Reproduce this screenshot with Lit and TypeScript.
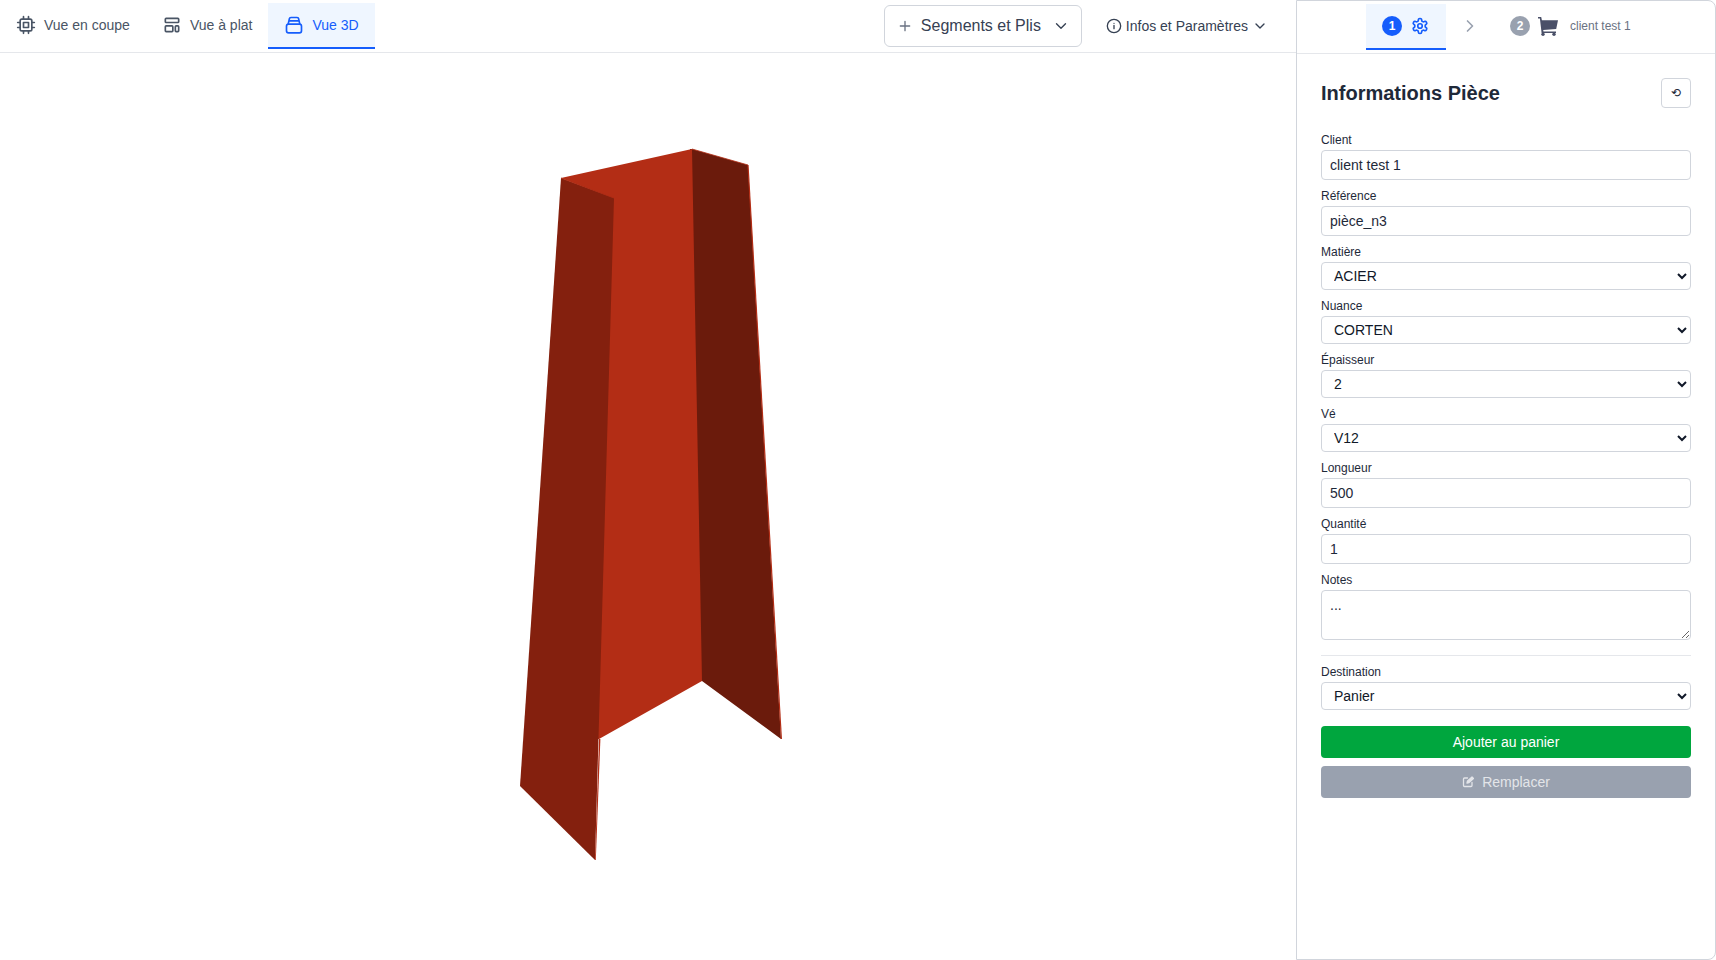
import { LitElement, html, css, svg } from "lit";
import { customElement } from "lit/decorators.js";

const chevron = html`<svg class="chev" viewBox="0 0 24 24" fill="none" stroke="currentColor" stroke-width="2" stroke-linecap="round" stroke-linejoin="round"><path d="M6 9l6 6 6-6"/></svg>`;

@customElement("app-root")
export class AppRoot extends LitElement {
  static styles = css`
    :host { display: flex; width: 1716px; height: 960px; overflow: hidden; background: #fff; font-family: "Liberation Sans", Arial, sans-serif; color: #1e2939; }
    * { box-sizing: border-box; }
    .main { flex: 1; min-width: 0; display: flex; flex-direction: column; }
    .topbar { height: 53px; flex: none; border-bottom: 1px solid #e5e7eb; display: flex; align-items: flex-start; }
    .tabs { display: flex; padding-top: 3px; }
    .tab { height: 46px; display: flex; align-items: center; gap: 8px; padding: 0 16px; font-size: 14px; color: #4a5565; border-bottom: 2px solid transparent; }
    .tab svg { width: 20px; height: 20px; flex: none; }
    .tab.active { color: #155dfc; background: #eff6ff; border-bottom-color: #155dfc; }
    .tools { margin-left: auto; display: flex; align-items: flex-start; padding: 5px 28px 0 0; }
    .seg { width: 198px; height: 42px; border: 1px solid #d1d5dc; border-radius: 6px; display: flex; align-items: center; padding: 0 11px 0 12px; font-size: 16px; color: #364153; margin-right: 24px; }
    .seg .plus { width: 16px; height: 16px; margin-right: 8px; color: #6a7282; }
    .seg .chev { width: 18px; height: 18px; margin-left: auto; stroke-width: 1.8; }
    .info { height: 42px; display: flex; align-items: center; font-size: 14px; color: #364153; }
    .info svg.i { width: 16px; height: 16px; margin-right: 4px; }
    .info .chev { width: 16px; height: 16px; margin-left: 4px; }
    .canvas { flex: 1; min-height: 0; position: relative; }
    .canvas svg { position: absolute; left: 0; top: -53px; width: 1296px; height: 960px; }
    .panel { width: 420px; flex: none; height: 960px; border: 1px solid #d1d5dc; border-radius: 0 8px 8px 0; display: flex; flex-direction: column; background: #fff; }
    .phead { height: 53px; flex: none; border-bottom: 1px solid #e5e7eb; display: flex; align-items: flex-start; padding-top: 3px; }
    .step1 { margin-left: 69px; width: 80px; height: 46px; background: #eff6ff; border-bottom: 2px solid #155dfc; display: flex; align-items: center; padding-left: 16px; gap: 9px; }
    .num { width: 20px; height: 20px; border-radius: 50%; color: #fff; font-size: 12px; font-weight: 700; display: flex; align-items: center; justify-content: center; flex: none; }
    .num.blue { background: #155dfc; }
    .num.gray { background: #99a1af; }
    .step1 svg { width: 18px; height: 18px; color: #155dfc; }
    .sep { width: 20px; height: 44px; margin-left: 14px; display: flex; align-items: center; color: #99a1af; }
    .sep svg { width: 20px; height: 20px; }
    .step2 { margin-left: 30px; height: 44px; display: flex; align-items: center; }
    .step2 svg { width: 20px; height: 19px; margin-left: 8px; color: #4a5068; }
    .step2 .t { font-size: 12px; color: #6a7282; margin-left: 12px; }
    .form { padding: 24px 24px 0 24px; display: flex; flex-direction: column; }
    .ftitle { display: flex; align-items: center; justify-content: space-between; height: 30px; margin-bottom: 24px; }
    .ftitle h2 { margin: 0; font-size: 20px; line-height: 28px; font-weight: 700; color: #1e2939; }
    .reset { width: 30px; height: 30px; border: 1px solid #d1d5dc; border-radius: 4px; display: flex; align-items: center; justify-content: center; font-family: "DejaVu Sans", sans-serif; font-size: 12px; color: #1e2939; }
    label { display: block; font-size: 12px; line-height: 16px; color: #1e2939; margin-bottom: 2px; }
    .f { margin-bottom: 8px; }
    input, select, textarea { display: block; width: 100%; font-family: inherit; font-size: 14px; color: #1e2939; background: #fff; border: 1px solid #d1d5dc; border-radius: 4px; margin: 0; outline: none; }
    input { height: 30px; padding: 0 8px; }
    select { height: 28px; padding: 0 8px; color: #101828; }
    textarea { height: 50px; padding: 6px 8px; resize: vertical; }
    hr { border: none; border-top: 1px solid #e5e7eb; margin: 15px 0 8px; }
    .notes { margin-bottom: 0; }
    .btn { height: 32px; border-radius: 4px; display: flex; align-items: center; justify-content: center; font-size: 14px; color: #fff; }
    .btn.green { background: #00a63e; margin-top: 16px; }
    .dest { margin-bottom: 0; }
    .btn.gray { background: #99a1af; color: #e3e5e9; margin-top: 8px; gap: 8px; }
    .btn.gray svg { width: 12px; height: 12px; }
  `;

  private input(l: string, v: string) {
    return html`<div class="f"><label>${l}</label><input .value=${v} /></div>`;
  }
  private select(l: string, v: string) {
    return html`<div class="f"><label>${l}</label><select><option>${v}</option></select></div>`;
  }

  render() {
    return html`
      <div class="main">
        <div class="topbar">
          <div class="tabs">
            <div class="tab">
              <svg viewBox="0 0 24 24" fill="none" stroke="currentColor" stroke-width="2" stroke-linecap="round" stroke-linejoin="round"><rect x="5" y="5" width="14" height="14" rx="2"/><rect x="9" y="9" width="6" height="6"/><path d="M9 2v3M15 2v3M9 19v3M15 19v3M2 9h3M2 15h3M19 9h3M19 15h3"/></svg>
              Vue en coupe
            </div>
            <div class="tab">
              <svg viewBox="0 0 24 24" fill="none" stroke="currentColor" stroke-width="2" stroke-linecap="round" stroke-linejoin="round"><rect x="4" y="4" width="16" height="5" rx="1"/><rect x="4" y="13" width="9" height="7" rx="1"/><rect x="16" y="13" width="4" height="7" rx="1"/></svg>
              Vue à plat
            </div>
            <div class="tab active">
              <svg viewBox="0 0 24 24" fill="none" stroke="currentColor" stroke-width="2" stroke-linecap="round" stroke-linejoin="round"><rect x="3" y="11" width="18" height="10.5" rx="2.5"/><path d="M5 11l1.4-6.2A2 2 0 0 1 8.4 3h7.2a2 2 0 0 1 2 1.8L19 11M5.8 7h12.4"/></svg>
              Vue 3D
            </div>
          </div>
          <div class="tools">
            <div class="seg">
              <svg class="plus" viewBox="0 0 24 24" fill="none" stroke="currentColor" stroke-width="2" stroke-linecap="round"><path d="M12 5v14M5 12h14"/></svg>
              Segments et Plis
              ${chevron}
            </div>
            <div class="info">
              <svg class="i" viewBox="0 0 24 24" fill="none" stroke="currentColor" stroke-width="2" stroke-linecap="round"><circle cx="12" cy="12" r="10"/><path d="M12 16v-5M12 8h.01"/></svg>
              Infos et Paramètres
              ${chevron}
            </div>
          </div>
        </div>
        <div class="canvas">
          <svg viewBox="0 0 1296 960">
            ${svg`
              <polygon points="690,149 692,149 748,165 781,739 702,681 700,681" fill="#6b1b0c"/>
              <polygon points="561,178 692,149 702,681 599,739 597,739 612,198" fill="#b32d15"/>
              <polygon points="561,178 614,198 595,860 520,786" fill="#84200e"/>
              <polygon points="599,739 600.4,739 595.8,860 595,860" fill="#b32d15"/>
              <polygon points="747.4,165 748.6,165 782,739 780.8,739" fill="#b32d15"/>
              <polyline points="561,178 614,198" fill="none" stroke="#b32d15" stroke-width="0.8"/>
              <polyline points="692,149 748,165" fill="none" stroke="#b32d15" stroke-width="0.8"/>
            `}
          </svg>
        </div>
      </div>
      <aside class="panel">
        <div class="phead">
          <div class="step1">
            <span class="num blue">1</span>
            <svg viewBox="0 0 24 24" fill="none" stroke="currentColor" stroke-width="2.2" stroke-linecap="round" stroke-linejoin="round"><path d="M12.22 2h-.44a2 2 0 0 0-2 2v.18a2 2 0 0 1-1 1.73l-.43.25a2 2 0 0 1-2 0l-.15-.08a2 2 0 0 0-2.73.73l-.22.38a2 2 0 0 0 .73 2.73l.15.1a2 2 0 0 1 1 1.72v.51a2 2 0 0 1-1 1.74l-.15.09a2 2 0 0 0-.73 2.73l.22.38a2 2 0 0 0 2.73.73l.15-.08a2 2 0 0 1 2 0l.43.25a2 2 0 0 1 1 1.73V20a2 2 0 0 0 2 2h.44a2 2 0 0 0 2-2v-.18a2 2 0 0 1 1-1.73l.43-.25a2 2 0 0 1 2 0l.15.08a2 2 0 0 0 2.73-.73l.22-.39a2 2 0 0 0-.73-2.73l-.15-.08a2 2 0 0 1-1-1.74v-.5a2 2 0 0 1 1-1.74l.15-.09a2 2 0 0 0 .73-2.73l-.22-.38a2 2 0 0 0-2.73-.73l-.15.08a2 2 0 0 1-2 0l-.43-.25a2 2 0 0 1-1-1.73V4a2 2 0 0 0-2-2z"/><circle cx="12" cy="12" r="3"/></svg>
          </div>
          <div class="sep"><svg viewBox="0 0 24 24" fill="none" stroke="currentColor" stroke-width="2" stroke-linecap="round" stroke-linejoin="round"><path d="M9 6l6 6-6 6"/></svg></div>
          <div class="step2">
            <span class="num gray">2</span>
            <svg viewBox="0 0 20 19" fill="currentColor"><path d="M0 0h3.2l.7 3.2H20l-1.8 8.8-13 .9.3 1.6H18v1.4H3.6L1.9 1.4H0z"/><circle cx="5" cy="17.2" r="1.7"/><circle cx="16" cy="17.2" r="1.7"/></svg>
            <span class="t">client test 1</span>
          </div>
        </div>
        <div class="form">
          <div class="ftitle">
            <h2>Informations Pièce</h2>
            <div class="reset">⟲</div>
          </div>
          ${this.input("Client", "client test 1")}
          ${this.input("Référence", "pièce_n3")}
          ${this.select("Matière", "ACIER")}
          ${this.select("Nuance", "CORTEN")}
          ${this.select("Épaisseur", "2")}
          ${this.select("Vé", "V12")}
          ${this.input("Longueur", "500")}
          ${this.input("Quantité", "1")}
          <div class="f notes"><label>Notes</label><textarea .value=${"..."}></textarea></div>
          <hr />
          <div class="f dest"><label>Destination</label><select><option>Panier</option></select></div>
          <div class="btn green">Ajouter au panier</div>
          <div class="btn gray">
            <svg viewBox="0 0 24 24" fill="none" stroke="currentColor" stroke-width="2.6" stroke-linecap="round" stroke-linejoin="round"><path d="M20 13v6a2 2 0 0 1-2 2H5a2 2 0 0 1-2-2V6a2 2 0 0 1 2-2h6"/><path d="M10 14l1-4 9-8 3 3-9 8z" fill="currentColor"/></svg>
            Remplacer
          </div>
        </div>
      </aside>
    `;
  }
}
